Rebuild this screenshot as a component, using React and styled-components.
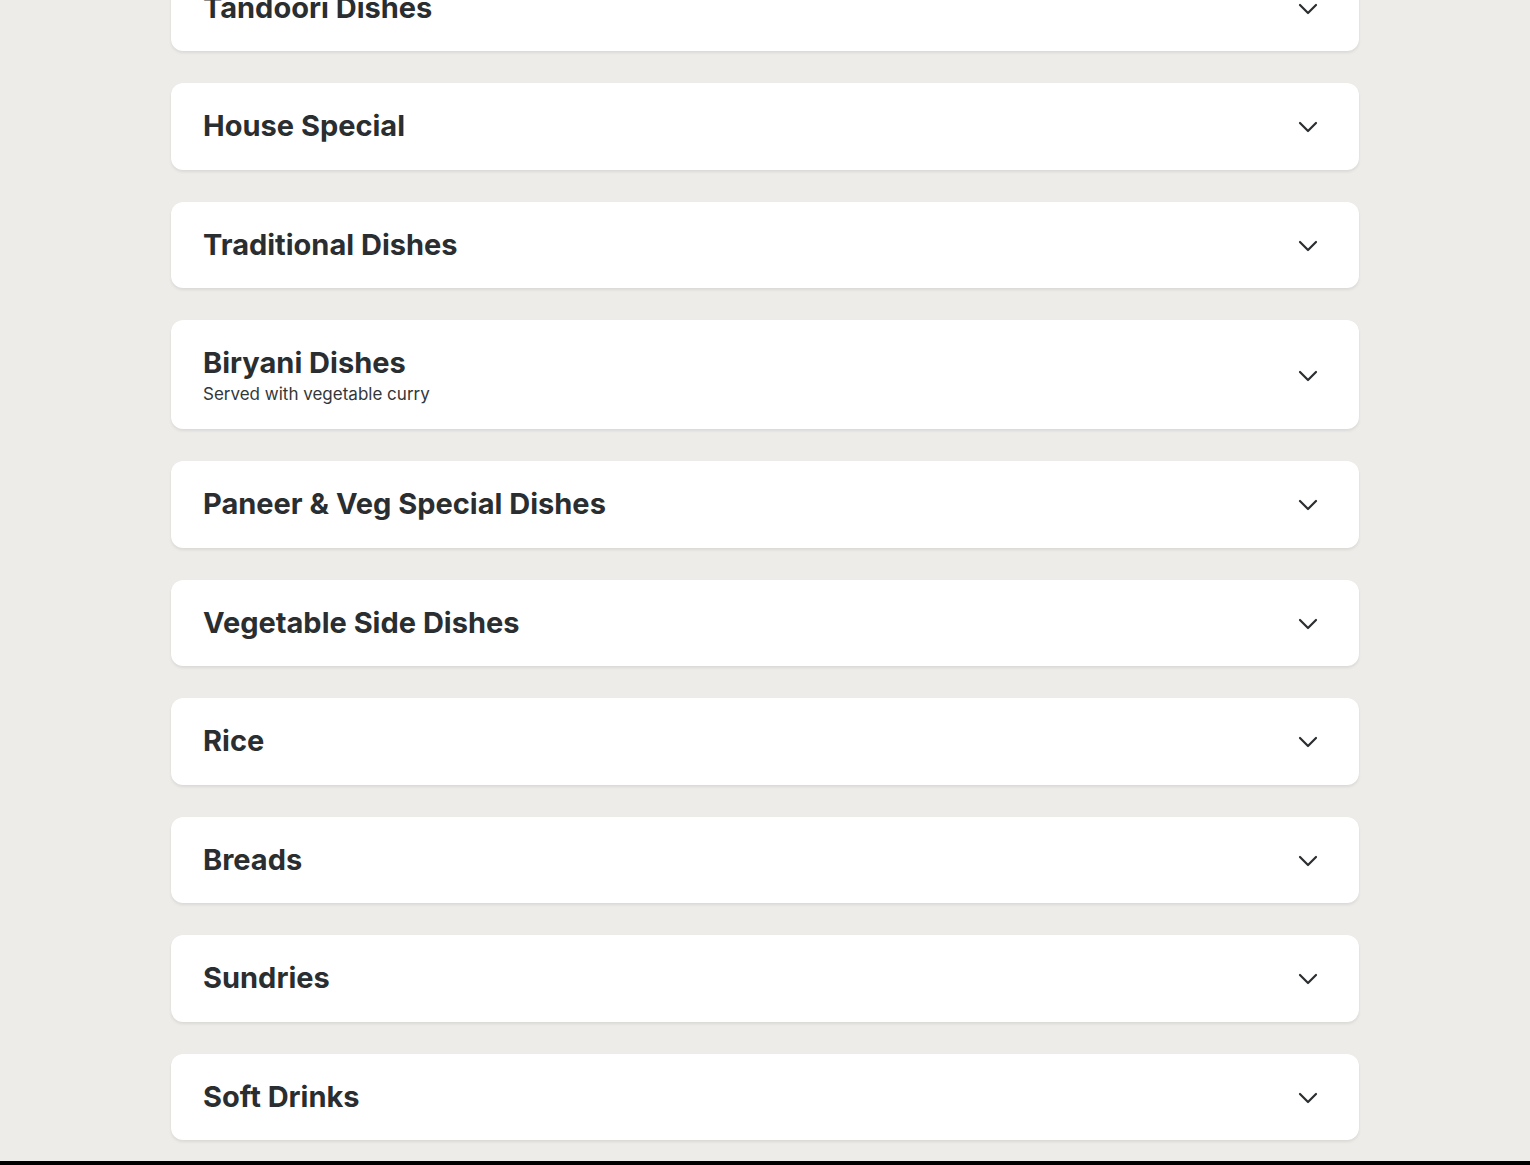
import React from "react";
import styled, { createGlobalStyle } from "styled-components";

const Global = createGlobalStyle`
  html, body { margin: 0; padding: 0; background: #edece9; }
  body { font-family: Inter, "Noto Sans", "Liberation Sans", sans-serif; overflow: hidden; }
`;

const Page = styled.main`
  display: flex;
  flex-direction: column;
  align-items: center;
  margin-top: -35.5px;
`;

const List = styled.div`
  width: 1188px;
  display: flex;
  flex-direction: column;
  gap: 32px;
  padding-bottom: 21px;
`;

const Card = styled.button`
  all: unset;
  box-sizing: border-box;
  display: flex;
  align-items: center;
  justify-content: space-between;
  background: #ffffff;
  border-radius: 12px;
  padding: 24px 41px 24px 32px;
  box-shadow: 0 2px 3px rgba(0, 0, 0, 0.08), 0 0 1px rgba(0, 0, 0, 0.04);
  cursor: pointer;
`;

const Text = styled.div`
  display: flex;
  flex-direction: column;
`;

const Title = styled.h2`
  margin: 0;
  font-size: 29px;
  line-height: 38.5px;
  font-weight: 700;
  color: #2a2e30;
`;

const Sub = styled.p`
  margin: 0;
  font-size: 17px;
  line-height: 22.5px;
  color: #33373a;
`;

const Footer = styled.div`
  height: 40px;
  background: #000;
`;

const Icon = styled.svg`
  margin-top: 2px;
  flex: none;
`;

const Chevron = () => (
  <Icon width="20" height="12" viewBox="0 0 20 12" fill="none">
    <path d="M2 2 L10 10 L18 2" stroke="#2a2e30" strokeWidth="2.2" strokeLinecap="round" strokeLinejoin="round" />
  </Icon>
);

const sections = [
  { title: "Tandoori Dishes" },
  { title: "House Special" },
  { title: "Traditional Dishes" },
  { title: "Biryani Dishes", sub: "Served with vegetable curry" },
  { title: "Paneer & Veg Special Dishes" },
  { title: "Vegetable Side Dishes" },
  { title: "Rice" },
  { title: "Breads" },
  { title: "Sundries" },
  { title: "Soft Drinks" },
];

export default function App() {
  return (
    <>
      <Global />
      <Page>
        <List>
          {sections.map((s) => (
            <Card key={s.title}>
              <Text>
                <Title>{s.title}</Title>
                {s.sub && <Sub>{s.sub}</Sub>}
              </Text>
              <Chevron />
            </Card>
          ))}
        </List>
      </Page>
      <Footer />
    </>
  );
}
